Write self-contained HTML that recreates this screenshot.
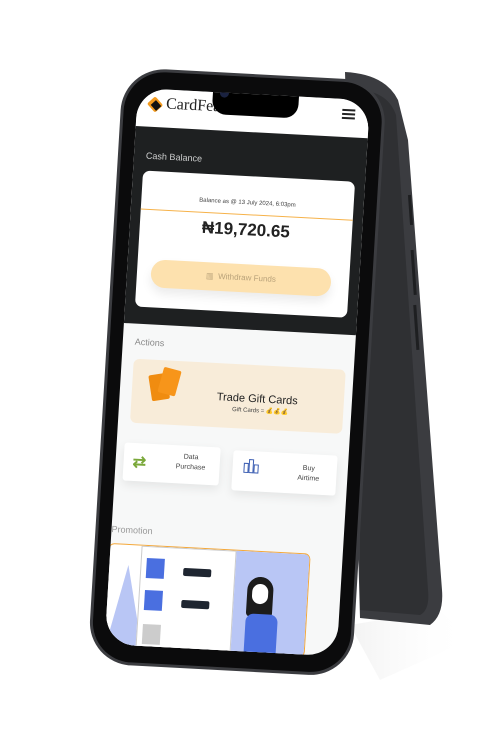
<!DOCTYPE html>
<html><head><meta charset="utf-8"><style>
*{margin:0;padding:0;box-sizing:border-box}
body{width:480px;height:740px;background:#fff;position:relative;overflow:hidden;font-family:"Liberation Sans",sans-serif}
.tf{position:absolute;left:138px;top:88px;transform-origin:0 0;transform:matrix(1,0.053,-0.06,1,0,0)}
.frame{position:absolute;left:-13px;top:-17px;width:258px;height:590px;border-radius:40px;background:#0b0b0c;box-shadow:0 0 0 3px #3b3c40}
.screen{position:absolute;left:0;top:0;width:232px;height:556px;border-radius:30px;overflow:hidden;background:#f7f8f8}
.abs{position:absolute}
</style></head><body>
<svg class="abs" style="left:0;top:0" width="480" height="740">
<defs><linearGradient id="sh" x1="0" y1="0" x2="1" y2="0"><stop offset="0" stop-color="#e6e6e6"/><stop offset="1" stop-color="#fff" stop-opacity="0"/></linearGradient></defs>
<polygon points="350,625 440,610 470,640 380,680" fill="url(#sh)" opacity=".5"/>
<path d="M345,72 Q385,74 398,100 L408,140 L442,590 Q444,615 430,625 L360,618 Z" fill="#3b3c40"/>
<path d="M360,90 Q388,92 396,115 L428,590 Q430,610 420,615 L360,610 Z" fill="#2f3033"/>
<rect x="409" y="195" width="3" height="30" fill="#1e1f21" transform="rotate(-4 410 210)"/>
<rect x="412" y="250" width="3" height="45" fill="#1e1f21" transform="rotate(-4 413 270)"/>
<rect x="415" y="305" width="3" height="45" fill="#1e1f21" transform="rotate(-4 416 330)"/>
</svg>
<div class="tf" style="width:232px;height:556px">
 <div class="frame"></div>
 <div class="screen">
  <div class="abs" style="left:0;top:0;width:232px;height:38px;background:#fff"></div>
  <div class="abs" style="left:12px;top:10px;width:12px;height:11px;background:#f39a1e;transform:rotate(45deg);border-radius:2px"></div>
  <div class="abs" style="left:15px;top:13px;width:8px;height:7px;background:#111;transform:rotate(45deg)"></div>
  <div class="abs" style="left:29px;top:6px;font-family:'Liberation Serif',serif;font-size:16px;color:#222">CardFeast</div>
  <div class="abs" style="left:205px;top:10px;width:13px;height:2px;background:#222;box-shadow:0 4px 0 #222,0 8px 0 #222"></div>
  <div class="abs" style="left:75px;top:-5px;width:86px;height:27px;background:#000;border-radius:0 0 14px 14px"></div>
  <div class="abs" style="left:82px;top:-4px;width:9px;height:9px;background:#1a2240;border-radius:50%"></div>
  <div class="abs" style="left:0;top:38px;width:232px;height:197px;background:#1e2021"></div>
  <div class="abs" style="left:12px;top:62px;font-size:9px;color:#cfd0d0">Cash Balance</div>
  <div class="abs" style="left:10px;top:82px;width:212px;height:136px;background:#fff;border-radius:7px"></div>
  <div class="abs" style="left:10px;top:106px;width:212px;text-align:center;font-size:6px;color:#444">Balance as @ 13 July 2024, 6:03pm</div>
  <div class="abs" style="left:10px;top:120px;width:212px;height:1px;background:#f6b24a"></div>
  <div class="abs" style="left:10px;top:126px;width:212px;text-align:center;font-size:17px;font-weight:bold;color:#222">₦19,720.65</div>
  <div class="abs" style="left:24px;top:170px;width:180px;height:28px;background:#fde1ae;border-radius:14px;box-shadow:0 6px 10px rgba(0,0,0,.08);text-align:center;line-height:28px;font-size:8px;color:#b9a27a">▥ &nbsp;Withdraw Funds</div>
  <div class="abs" style="left:12px;top:248px;font-size:9px;color:#888">Actions</div>
  <div class="abs" style="left:12px;top:270px;width:212px;height:64px;background:#f8ecd9;border-radius:6px"></div>
  <div class="abs" style="left:30px;top:284px;width:18px;height:26px;background:#f08c10;transform:rotate(-12deg);border-radius:2px"></div>
  <div class="abs" style="left:40px;top:278px;width:18px;height:26px;background:#f7951a;transform:rotate(12deg);border-radius:2px"></div>
  <div class="abs" style="left:97px;top:298px;font-size:11px;color:#222">Trade Gift Cards</div>
  <div class="abs" style="left:113px;top:312px;font-size:6px;color:#444">Gift Cards = <span style="color:#e3a21a">💰💰💰</span></div>
  <div class="abs" style="left:8px;top:354px;width:96px;height:38px;background:#fff;border-radius:3px;box-shadow:0 4px 10px rgba(0,0,0,.08)"></div>
  <div class="abs" style="left:17px;top:363px;font-size:16px;color:#7aa83a;font-weight:bold">⇄</div>
  <div class="abs" style="left:50px;top:361px;width:50px;text-align:center;font-size:7px;color:#444;line-height:10px">Data<br>Purchase</div>
  <div class="abs" style="left:117px;top:356px;width:104px;height:40px;background:#fff;border-radius:3px;box-shadow:0 4px 10px rgba(0,0,0,.08)"></div>
  <div class="abs" style="left:128px;top:368px;width:5px;height:10px;border:1.5px solid #3d5fb3"></div>
  <div class="abs" style="left:133px;top:364px;width:5px;height:14px;border:1.5px solid #3d5fb3"></div>
  <div class="abs" style="left:138px;top:369px;width:5px;height:9px;border:1.5px solid #3d5fb3"></div>
  <div class="abs" style="left:168px;top:366px;width:50px;text-align:center;font-size:7px;color:#444;line-height:10px">Buy<br>Airtime</div>
  <div class="abs" style="left:0;top:436px;font-size:9px;color:#999">Promotion</div>
  <div class="abs" style="left:-2px;top:455px;width:202px;height:104px;border:1px solid #f4a83a;border-radius:6px;background:#fff;overflow:hidden">
    <div class="abs" style="left:0;top:20px;width:40px;height:90px;background:#b9c6f5;clip-path:polygon(50% 0,100% 100%,0 100%)"></div>
    <div class="abs" style="left:32px;top:0;width:95px;height:110px;background:#fff;border:1px solid #ccc"></div>
    <div class="abs" style="left:38px;top:12px;width:18px;height:20px;background:#4a6fe0"></div>
    <div class="abs" style="left:75px;top:20px;width:28px;height:8px;background:#1e2530;border-radius:2px"></div>
    <div class="abs" style="left:38px;top:44px;width:18px;height:20px;background:#4a6fe0"></div>
    <div class="abs" style="left:75px;top:52px;width:28px;height:8px;background:#1e2530;border-radius:2px"></div>
    <div class="abs" style="left:38px;top:78px;width:18px;height:20px;background:#ccc"></div>
    <div class="abs" style="left:127px;top:0;width:75px;height:110px;background:#b9c6f5"></div>
    <div class="abs" style="left:140px;top:25px;width:26px;height:40px;background:#1c1c1c;border-radius:13px 13px 4px 4px"></div>
    <div class="abs" style="left:145px;top:32px;width:16px;height:20px;background:#fff;border-radius:8px"></div>
    <div class="abs" style="left:140px;top:62px;width:32px;height:50px;background:#4a6fe0;border-radius:8px 8px 0 0"></div>
  </div>
 </div>
</div>
</body></html>
